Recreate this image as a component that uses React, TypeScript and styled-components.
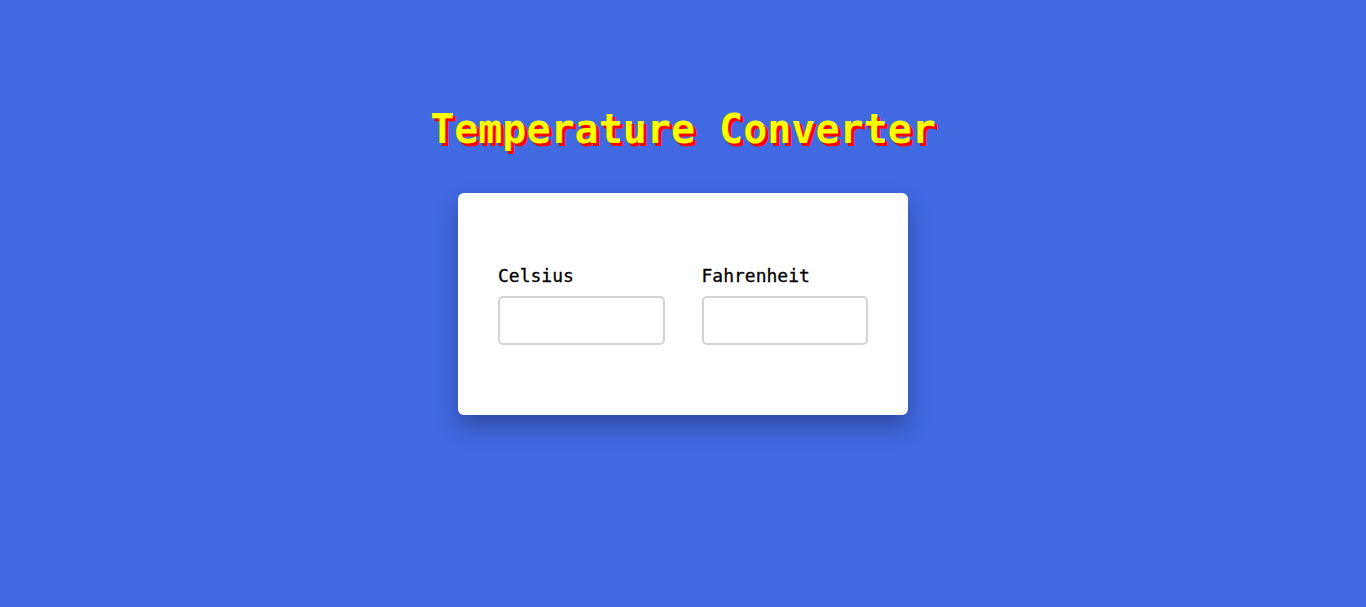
import React from "react";
import styled, { createGlobalStyle } from "styled-components";

const GlobalStyle = createGlobalStyle`
  html, body {
    margin: 0;
    padding: 0;
    background: #4169e1;
  }
  body {
    font-family: "DejaVu Sans Mono", "Liberation Mono", monospace;
  }
`;

const Page = styled.main`
  min-height: 100vh;
  display: flex;
  flex-direction: column;
  align-items: center;
  padding-top: 106px;
  box-sizing: border-box;
  background: #4169e1;
`;

const Title = styled.h1`
  margin: 0 0 40px;
  font-family: "DejaVu Sans Mono", "Liberation Mono", monospace;
  font-size: 40px;
  font-weight: bold;
  line-height: 47px;
  color: #ffff00;
  text-shadow: 3px 3px 0 #ff0000;
`;

const Card = styled.section`
  width: 450px;
  box-sizing: border-box;
  padding: 71px 40px 70px;
  background: #ffffff;
  border-radius: 6px;
  box-shadow: 0 12px 22px rgba(0, 0, 0, 0.28);
  display: grid;
  grid-template-columns: 1fr 1fr;
  column-gap: 37px;
`;

const Field = styled.div`
  display: flex;
  flex-direction: column;
`;

const Label = styled.label`
  display: block;
  font-family: "DejaVu Sans Mono", "Liberation Mono", monospace;
  font-size: 18px;
  line-height: 24px;
  color: #000;
  margin-bottom: 8px;
  -webkit-text-stroke: 0.3px #000;
`;

const Input = styled.input`
  box-sizing: border-box;
  width: 100%;
  height: 49px;
  border: 2px solid #d3d3d3;
  border-radius: 5px;
  padding: 0 10px;
  font-family: "DejaVu Sans Mono", monospace;
  font-size: 18px;
  outline: none;
  background: #fff;
`;

export default function App() {
  return (
    <>
      <GlobalStyle />
      <Page>
        <Title>Temperature Converter</Title>
        <Card>
          <Field>
            <Label htmlFor="celsius">Celsius</Label>
            <Input id="celsius" type="text" />
          </Field>
          <Field>
            <Label htmlFor="fahrenheit">Fahrenheit</Label>
            <Input id="fahrenheit" type="text" />
          </Field>
        </Card>
      </Page>
    </>
  );
}
